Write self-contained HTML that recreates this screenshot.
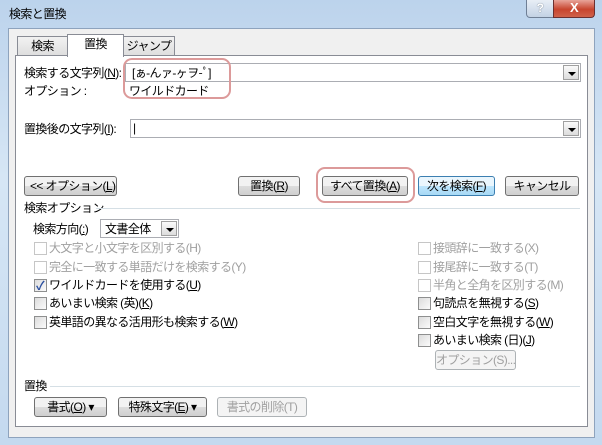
<!DOCTYPE html>
<html><head><meta charset="utf-8"><style>
*{box-sizing:border-box;margin:0;padding:0}
body{width:602px;height:445px;overflow:hidden;position:relative;font-family:"Liberation Sans","Noto Sans CJK JP",sans-serif;font-size:12px;letter-spacing:-0.6px;color:#000;background:linear-gradient(#bcd3ec,#d6e6f5 40%,#c4d9ef);}
.a{position:absolute;white-space:nowrap;line-height:14px}
.client{position:absolute;left:8px;top:28px;width:587px;height:410px;background:#f0f0f0;border:1px solid #8ea3bd}
.panel{position:absolute;left:15px;top:55px;width:573px;height:372px;background:#fff;border:1px solid #898c95}
.tab{position:absolute;height:21px;border:1px solid #898c95;border-bottom:none;background:linear-gradient(#f2f2f2,#dcdcdc);text-align:center;line-height:19px;white-space:nowrap}
.inp{position:absolute;height:19px;border:1px solid #abadb3;background:#fff}
.dd{position:absolute;right:1px;top:1px;width:16px;height:15px;border:1px solid #a0a0a0;background:linear-gradient(#fafafa,#dcdcdc)}
.dd:after{content:"";position:absolute;left:4px;top:6px;border-left:4px solid transparent;border-right:4px solid transparent;border-top:4px solid #000}
.btn{position:absolute;height:20px;border:1px solid #707070;border-radius:3px;background:linear-gradient(#f2f2f2 50%,#dddddd 50%,#cfcfcf);text-align:center;line-height:18px;white-space:nowrap;overflow:hidden}
.dis{color:#a0a0a0;border-color:#adb2b5;background:#f4f4f4}
.cb{position:absolute;width:13px;height:13px;border:1px solid #8e8f8f;background:linear-gradient(135deg,#dcdcdc,#fbfbfb)}
.cbd{border-color:#c6c6c6;background:#fff}
.g{color:#a0a0a0}
.hl{position:absolute;border:2px solid #dc9a9a;border-radius:9px}
.line{position:absolute;height:1px;background:#d5dfe5}
</style></head><body>
<div class="a" style="left:9px;top:7px;font-size:12px">検索と置換</div>
<div style="position:absolute;left:526px;top:0;width:28px;height:18px;border:1px solid #6f7f95;border-top:none;border-radius:0 0 0 4px;background:linear-gradient(#e8eef6,#c3d2e4);text-align:center;font-size:12px;line-height:16px;color:#fff;font-weight:bold;text-shadow:0 0 1px #345">?</div>
<div style="position:absolute;left:553px;top:0;width:42px;height:18px;border:1px solid #6b3030;border-top:none;border-radius:0 0 4px 0;background:linear-gradient(#e8a49a,#c7452f 55%,#d0614a);text-align:center;font-size:13px;line-height:16px;color:#fff;font-weight:bold">X</div>
<div class="client"></div>
<div class="tab" style="left:17px;top:36px;width:51px">検索</div>
<div class="tab" style="left:123px;top:36px;width:52px">ジャンプ</div>
<div class="panel"></div>
<div class="tab" style="left:67px;top:34px;width:57px;height:23px;background:#fff;z-index:2">置換</div>

<div class="a" style="left:24px;top:66px">検索する文字列(<u>N</u>):</div>
<div class="inp" style="left:125px;top:63px;width:456px"><div class="a" style="left:6px;top:2px">[ぁ-んァ-ヶヲ-ﾟ]</div><div class="dd"></div></div>
<div class="a" style="left:24px;top:84px">オプション :</div>
<div class="a" style="left:129px;top:84px">ワイルドカード</div>
<div class="hl" style="left:123px;top:58px;width:108px;height:41px"></div>
<div class="a" style="left:24px;top:122px">置換後の文字列(<u>I</u>):</div>
<div class="inp" style="left:130px;top:119px;width:451px"><div class="a" style="left:2px;top:1px">|</div><div class="dd"></div></div>

<div class="btn" style="left:24px;top:176px;width:93px;text-align:left;padding-left:5px">&lt;&lt; オプション(<u>L</u>)</div>
<div class="btn" style="left:238px;top:176px;width:62px">置換(<u>R</u>)</div>
<div class="btn" style="left:322px;top:176px;width:86px">すべて置換(<u>A</u>)</div>
<div class="btn" style="left:418px;top:176px;width:77px;border-color:#3c7fb1;background:linear-gradient(#eaf6fd 50%,#bee6fd 50%,#a7d9f5)">次を検索(<u>F</u>)</div>
<div class="btn" style="left:505px;top:176px;width:74px">キャンセル</div>
<div class="hl" style="left:316px;top:167px;width:99px;height:36px"></div>

<div class="a" style="left:24px;top:201px">検索オプション</div>
<div class="line" style="left:96px;top:208px;width:484px"></div>
<div class="a" style="left:33px;top:222px">検索方向(<u>:</u>)</div>
<div class="inp" style="left:100px;top:219px;width:79px"><div class="a" style="left:4px;top:2px">文書全体</div><div class="dd"></div></div>

<div class="cb cbd" style="left:34px;top:242px"></div><div class="a g" style="left:49px;top:241px">大文字と小文字を区別する(H)</div>
<div class="cb cbd" style="left:34px;top:261px"></div><div class="a g" style="left:49px;top:260px">完全に一致する単語だけを検索する(Y)</div>
<div class="cb" style="left:34px;top:279px"><span style="position:absolute;left:1px;top:-3px;color:#2a4fa0;font-size:12px;font-weight:bold">✓</span></div><div class="a" style="left:49px;top:278px">ワイルドカードを使用する(<u>U</u>)</div>
<div class="cb" style="left:34px;top:297px"></div><div class="a" style="left:49px;top:296px">あいまい検索 (英)(<u>K</u>)</div>
<div class="cb" style="left:34px;top:316px"></div><div class="a" style="left:49px;top:315px">英単語の異なる活用形も検索する(<u>W</u>)</div>

<div class="cb cbd" style="left:418px;top:242px"></div><div class="a g" style="left:433px;top:241px">接頭辞に一致する(X)</div>
<div class="cb cbd" style="left:418px;top:261px"></div><div class="a g" style="left:433px;top:260px">接尾辞に一致する(T)</div>
<div class="cb cbd" style="left:418px;top:279px"></div><div class="a g" style="left:433px;top:278px">半角と全角を区別する(M)</div>
<div class="cb" style="left:418px;top:297px"></div><div class="a" style="left:433px;top:296px">句読点を無視する(<u>S</u>)</div>
<div class="cb" style="left:418px;top:316px"></div><div class="a" style="left:433px;top:315px">空白文字を無視する(<u>W</u>)</div>
<div class="cb" style="left:418px;top:334px"></div><div class="a" style="left:433px;top:333px">あいまい検索 (日)(<u>J</u>)</div>
<div class="btn dis" style="left:435px;top:350px;width:81px">オプション(S)...</div>

<div class="a" style="left:24px;top:379px">置換</div>
<div class="line" style="left:50px;top:386px;width:530px"></div>
<div class="btn" style="left:34px;top:397px;width:73px">書式(<u>O</u>) ▾</div>
<div class="btn" style="left:118px;top:397px;width:89px">特殊文字(<u>E</u>) ▾</div>
<div class="btn dis" style="left:217px;top:397px;width:90px">書式の削除(T)</div>
</body></html>
